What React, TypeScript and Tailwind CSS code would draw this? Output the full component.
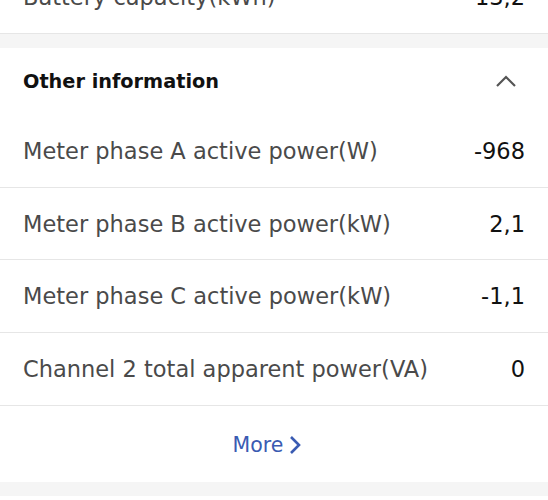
import React from "react";

const font = { fontFamily: '"DejaVu Sans", sans-serif' };

function Row({ label, value, h = "h-[73px]" }: { label: string; value: string; h?: string }) {
  return (
    <div className={`flex ${h} items-center justify-between border-b border-[#e6e6e6] pl-[23px] pr-[23px] pt-[2px]`}>
      <span className="text-[22.5px] text-[#4a4a4a]">{label}</span>
      <span className="text-[22.5px] text-[#111111]">{value}</span>
    </div>
  );
}

export default function App() {
  return (
    <div className="h-[500px] w-[548px] overflow-hidden bg-white" style={font}>
      <div className="-mt-[39px] bg-white">
        <Row label="Battery capacity(kWh)" value="13,2" />
      </div>
      <div className="h-[14px] bg-[#f5f5f5]" />
      <div className="bg-white">
        <div className="flex h-[67px] items-center justify-between pl-[23px] pr-[31px] pt-[2px]">
          <span className="text-[19.3px] font-semibold text-[#111111]">Other information</span>
          <svg width="22" height="14" viewBox="0 0 22 14" className="-mt-[3px]">
            <path d="M2 12 L11 3 L20 12" fill="none" stroke="#555" strokeWidth="2.2" />
          </svg>
        </div>
        <Row label="Meter phase A active power(W)" value="-968" />
        <Row label="Meter phase B active power(kW)" value="2,1" h="h-[72px]" />
        <Row label="Meter phase C active power(kW)" value="-1,1" />
        <Row label="Channel 2 total apparent power(VA)" value="0" />
        <div className="flex h-[76px] items-center justify-center gap-[6px] pr-[14px] pt-[2px] text-[20.5px] text-[#3a5bb2]">
          <span>More</span>
          <svg width="12" height="20" viewBox="0 0 12 20">
            <path d="M2 2 L10 10 L2 18" fill="none" stroke="#3a5bb2" strokeWidth="2.6" />
          </svg>
        </div>
      </div>
      <div className="h-[14px] bg-[#f5f5f5]" />
    </div>
  );
}
